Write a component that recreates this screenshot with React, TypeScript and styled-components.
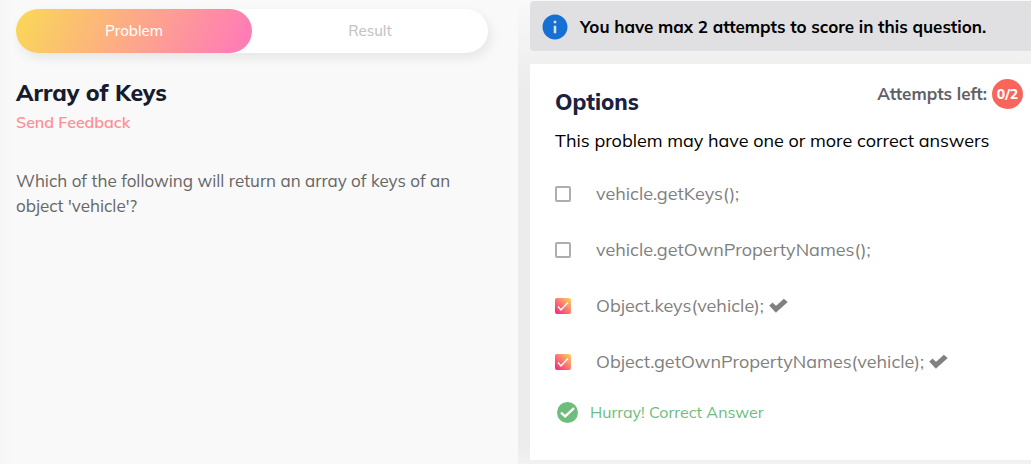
import React, { useState } from "react";
import styled, { createGlobalStyle } from "styled-components";
import { MdInfo } from "react-icons/md";

const GlobalStyle = createGlobalStyle`
  * { box-sizing: border-box; }
  body {
    margin: 0;
    background: #f9f9f9;
    font-family: "Mulish", "Muli", "Open Sans", "Noto Sans", sans-serif;
  }
`;

const Page = styled.main`
  display: grid;
  grid-template-columns: 101fr 100fr;
  min-height: 100vh;
`;

const ProblemPane = styled.section`
  padding: 9px 30px 24px 16px;
  background: linear-gradient(90deg, #f6f6f6, #f9f9f9 12px);
`;

const TabBar = styled.div`
  display: flex;
  height: 44px;
  border-radius: 22px;
  background: #fff;
  box-shadow: 3px 5px 12px rgba(0, 0, 0, 0.08);
`;

const Tab = styled.button<{ $active?: boolean }>`
  flex: 1;
  border: 0;
  padding: 0;
  border-radius: 22px;
  font-family: inherit;
  font-size: 15px;
  font-weight: 500;
  line-height: 20px;
  cursor: pointer;
  color: ${(p) => (p.$active ? "#fff" : "#c4c4c4")};
  background: ${(p) =>
    p.$active ? "linear-gradient(115deg, #fad956 0%, #ff7db5 94%)" : "transparent"};
`;

const Title = styled.h1`
  margin: 24px 0 0;
  font-size: 23px;
  line-height: 32px;
  font-weight: 800;
  color: #161c2d;
`;

const Feedback = styled.a`
  display: inline-block;
  margin-top: 3px;
  font-size: 16px;
  line-height: 20px;
  font-weight: 600;
  color: #ff8f92;
  text-decoration: none;
`;

const Statement = styled.p`
  margin: 36px 0 0;
  font-size: 17px;
  line-height: 25px;
  color: #666;
`;

const AnswerPane = styled.section`
  padding: 1px 0 4px 12px;
  background: linear-gradient(180deg, #f9f9f9 0, #ececec 90px, #ececec calc(100% - 20px), #f2f2f2 100%);
`;

const Notice = styled.div`
  display: flex;
  align-items: center;
  gap: 10px;
  height: 50px;
  padding: 1px 10px 0;
  border-radius: 4px 0 0 4px;
  background: #e0e0e2;
  font-size: 17px;
  line-height: 24px;
  font-weight: 700;
  color: #000;
  white-space: nowrap;

  svg {
    flex: none;
    color: #1670d4;
  }
`;

const Card = styled.div`
  margin-top: 13px;
  padding: 15px 8px 36px 25px;
  background: #fff;
`;

const CardHeader = styled.header`
  display: flex;
  justify-content: space-between;
  align-items: flex-start;
`;

const CardTitle = styled.h2`
  margin: 8px 0 0;
  font-size: 22px;
  line-height: 30px;
  font-weight: 800;
  color: #1b2140;
`;

const Attempts = styled.div`
  display: flex;
  align-items: center;
  gap: 5px;
  font-size: 17px;
  line-height: 24px;
  font-weight: 700;
  color: #5f6169;
`;

const Count = styled.span`
  display: grid;
  place-items: center;
  width: 31px;
  height: 30px;
  border-radius: 50%;
  background: #f8665b;
  font-size: 14px;
  font-weight: 800;
  color: #fff;
`;

const Hint = styled.p`
  margin: 12px 0 13px;
  font-size: 18px;
  line-height: 24px;
  color: #000;
`;

const OptionList = styled.ul`
  margin: 0;
  padding: 0;
  list-style: none;
`;

const Option = styled.label`
  display: flex;
  align-items: center;
  height: 56px;
  font-size: 18px;
  line-height: 24px;
  color: #808080;
  white-space: nowrap;
  cursor: pointer;
`;

const tick = encodeURIComponent(
  '<svg xmlns="http://www.w3.org/2000/svg" viewBox="0 0 16 16"><path d="M3 8.5 6 12 13 4.5" fill="none" stroke="#fff" stroke-width="1.4"/></svg>'
);

const Checkbox = styled.input`
  appearance: none;
  flex: none;
  width: 16px;
  height: 16px;
  margin: 0 25px 0 0;
  border: 2px solid #aeaeae;
  border-radius: 2px;

  &:checked {
    border: 0;
    background: url("data:image/svg+xml,${tick}"), linear-gradient(45deg, #fb1d80, #fbd45f);
  }
`;

const CorrectMark = styled.svg`
  width: 19px;
  height: 16px;
  margin-left: 5px;
  fill: #808080;
  stroke: #808080;
  stroke-width: 0.8;
  stroke-linejoin: round;
`;

const Result = styled.p`
  display: flex;
  align-items: center;
  gap: 12px;
  margin: 10px 0 0 2px;
  font-size: 16px;
  line-height: 24px;
  color: #6dbd7d;
`;

const SuccessIcon = styled.svg`
  flex: none;
  width: 21px;
  height: 21px;
`;

const options = [
  { text: "vehicle.getKeys();", correct: false },
  { text: "vehicle.getOwnPropertyNames();", correct: false },
  { text: "Object.keys(vehicle);", correct: true },
  { text: "Object.getOwnPropertyNames(vehicle);", correct: true },
];

export default function App() {
  const [picked, setPicked] = useState(options.map((o) => o.correct));
  const toggle = (index: number) =>
    setPicked(picked.map((value, i) => (i === index ? !value : value)));

  return (
    <>
      <GlobalStyle />
      <Page>
        <ProblemPane>
          <TabBar>
            <Tab type="button" $active>Problem</Tab>
            <Tab type="button">Result</Tab>
          </TabBar>
          <Title>Array of Keys</Title>
          <Feedback href="#feedback">Send Feedback</Feedback>
          <Statement>
            Which of the following will return an array of keys of an object 'vehicle'?
          </Statement>
        </ProblemPane>
        <AnswerPane>
          <Notice>
            <MdInfo size={30} />
            You have max 2 attempts to score in this question.
          </Notice>
          <Card>
            <CardHeader>
              <CardTitle>Options</CardTitle>
              <Attempts>
                Attempts left: <Count>0/2</Count>
              </Attempts>
            </CardHeader>
            <Hint>This problem may have one or more correct answers</Hint>
            <OptionList>
              {options.map((option, i) => (
                <li key={option.text}>
                  <Option>
                    <Checkbox type="checkbox" checked={picked[i]} onChange={() => toggle(i)} />
                    {option.text}
                    {option.correct && (
                      <CorrectMark viewBox="0 0 19 16" aria-hidden="true">
                        <path d="M0.7 7.6 3.6 5 7 8.3 14.8 1.2 18.3 4 6.8 14.3Z" />
                      </CorrectMark>
                    )}
                  </Option>
                </li>
              ))}
            </OptionList>
            <Result>
              <SuccessIcon viewBox="0 0 21 21" aria-hidden="true">
                <circle cx="10.5" cy="10.5" r="10.5" fill="#6dbd7d" />
                <path d="M4 10.6 8.2 14.4 17 6.2" fill="none" stroke="#fff" strokeWidth="2.4" />
              </SuccessIcon>
              Hurray! Correct Answer
            </Result>
          </Card>
        </AnswerPane>
      </Page>
    </>
  );
}
